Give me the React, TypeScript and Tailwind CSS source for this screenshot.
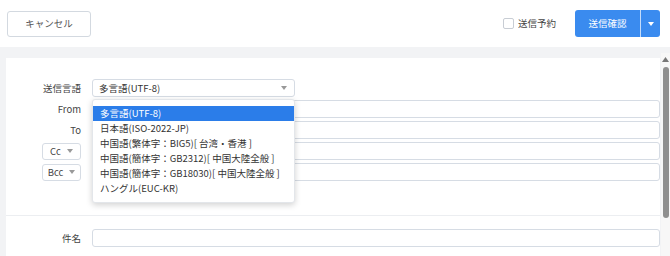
import { useState } from 'react';

const FONT = "font-['Noto_Sans_CJK_JP','Noto_Sans',sans-serif]";

const encodings = [
    '多言語(UTF-8)',
    '日本語(ISO-2022-JP)',
    '中国語(繁体字：BIG5)[ 台湾・香港 ]',
    '中国語(簡体字：GB2312)[ 中国大陸全般 ]',
    '中国語(簡体字：GB18030)[ 中国大陸全般 ]',
    'ハングル(EUC-KR)',
];

function Caret({ className = '' }: { className?: string }) {
    return (
        <svg width="6" height="4" viewBox="0 0 6 4" className={className}>
            <path d="M0 0h6L3 4z" fill="currentColor" />
        </svg>
    );
}

function TextInput() {
    return <div className="h-[18px] flex-1 border border-[#d6dce4] rounded-[3px] bg-white" />;
}

function Row({ label, children }: { label: React.ReactNode; children: React.ReactNode }) {
    return (
        <div className="flex items-center h-[18px]">
            <div className="w-[75px] flex justify-end items-center text-[#444]">{label}</div>
            <div className="ml-[11px] flex-1 flex relative">{children}</div>
        </div>
    );
}

function CcButton({ text }: { text: string }) {
    return (
        <div className="w-[39px] h-[17px] border border-[#d6dce4] rounded-[3px] flex items-center justify-center gap-[6px] text-[#444]">
            <span>{text}</span>
            <Caret className="text-[#999]" />
        </div>
    );
}

export default function App() {
    const [selected] = useState(0);

    return (
        <div className={`w-[670px] h-[256px] overflow-hidden bg-[#f2f3f5] text-[9.5px] ${FONT}`}>
            {/* Top bar */}
            <div className="h-[47px] bg-white flex items-center justify-between pl-[7px] pr-[10px]">
                <button className="w-[84px] h-[26px] border border-[#d3d9e0] rounded-[3px] text-[#555] bg-white">
                    キャンセル
                </button>
                <div className="flex items-center">
                    <label className="flex items-center gap-[4px] text-[#444]">
                        <span className="w-[11px] h-[11px] border border-[#c8cdd4] rounded-[2px] bg-white" />
                        送信予約
                    </label>
                    <div className="ml-[19px] h-[27px] w-[85px] flex rounded-[3px] bg-[#3a8bef] text-white">
                        <div className="flex-1 flex items-center justify-center">送信確認</div>
                        <div className="w-px bg-white/70" />
                        <div className="w-[19px] flex items-center justify-center">
                            <Caret />
                        </div>
                    </div>
                </div>
            </div>

            <div className="flex">
                {/* Panel */}
                <div className="ml-[6px] mt-[11px] w-[654px] h-[200px] bg-white pt-[21px]">
                    <div className="flex flex-col gap-[3px]">
                        <Row label="送信言語">
                            <div className="relative w-[203px]">
                                <div className="h-[18px] border border-[#d6dce4] rounded-[3px] flex items-center justify-between pl-[6px] pr-[7px] text-[#333]">
                                    <span>{encodings[selected]}</span>
                                    <Caret className="text-[#999]" />
                                </div>
                                <div className="absolute left-0 top-[20px] w-[203px] z-10 bg-white border border-[#e3e6ea] rounded-[3px] shadow-[0_2px_6px_rgba(0,0,0,0.18)] py-[6px] text-[#333]">
                                    {encodings.map((e, i) => (
                                        <div
                                            key={e}
                                            className={`h-[15px] flex items-center pl-[7px] whitespace-nowrap ${i === selected ? 'bg-[#2b7de9] text-white' : ''}`}
                                        >
                                            {e}
                                        </div>
                                    ))}
                                </div>
                            </div>
                        </Row>
                        <Row label="From"><TextInput /></Row>
                        <Row label="To"><TextInput /></Row>
                        <Row label={<CcButton text="Cc" />}><TextInput /></Row>
                        <Row label={<CcButton text="Bcc" />}><TextInput /></Row>
                    </div>
                    <div className="mt-[34px] h-px bg-[#eceef1]" />
                    <div className="mt-[13px]">
                        <Row label="件名"><TextInput /></Row>
                    </div>
                </div>

                {/* Scrollbar */}
                <div className="ml-px w-[9px] h-[209px] bg-[#f7f7f7] mt-[6px] flex flex-col items-center">
                    <svg width="7" height="5" viewBox="0 0 7 5" className="mt-[4px] text-[#777]">
                        <path d="M3.5 0L7 5H0z" fill="currentColor" />
                    </svg>
                    <div className="mt-[5px] w-[6px] h-[151px] rounded-[3px] bg-[#8f8f8f]" />
                </div>
            </div>
        </div>
    );
}
